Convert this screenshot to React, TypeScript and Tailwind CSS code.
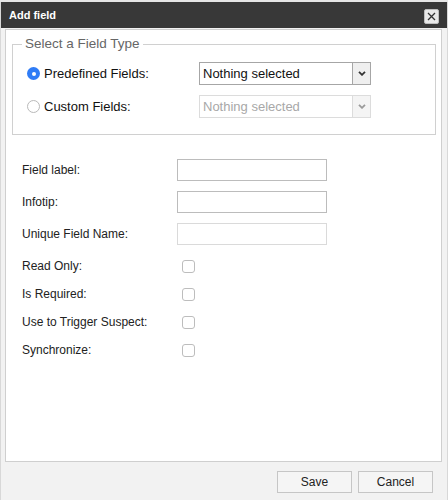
import React from "react";

const font = { fontFamily: '"Liberation Sans", Arial, sans-serif' };

function Chevron({ disabled }: { disabled?: boolean }) {
  return (
    <svg width="8" height="5" viewBox="0 0 8 5">
      <path
        d="M1 0.8 L4 3.8 L7 0.8"
        fill="none"
        stroke={disabled ? "#9a9a9a" : "#333"}
        strokeWidth="1.8"
      />
    </svg>
  );
}

function Select({ disabled }: { disabled?: boolean }) {
  return (
    <div
      className={
        "flex h-[23px] w-[172px] border " +
        (disabled ? "border-[#dcdcdc] bg-white text-[#a8a8a8]" : "border-[#a6a6a6] bg-white text-[#111]")
      }
    >
      <div className="flex flex-1 items-center pl-[3px] text-[13px]">Nothing selected</div>
      <div
        className={
          "flex w-[18px] items-center justify-center border-l " +
          (disabled ? "border-[#dcdcdc] bg-[#f4f4f4]" : "border-[#a6a6a6] bg-[#efefef]")
        }
      >
        <Chevron disabled={disabled} />
      </div>
    </div>
  );
}

function Radio({ checked }: { checked?: boolean }) {
  return checked ? (
    <span className="flex h-[13px] w-[13px] items-center justify-center rounded-full bg-[#2f7cf6]">
      <span className="h-[4px] w-[4px] rounded-full bg-white" />
    </span>
  ) : (
    <span className="h-[13px] w-[13px] rounded-full border border-[#b9b9b9] bg-white" />
  );
}

function TextRow({ label, faint }: { label: string; faint?: boolean }) {
  return (
    <div className="flex h-[22px] items-center">
      <div className="w-[155px] text-[12px] text-[#222]">{label}</div>
      <div
        className={
          "h-[22px] w-[150px] border bg-white " + (faint ? "border-[#dadada]" : "border-[#bcbcbc]")
        }
      />
    </div>
  );
}

function CheckRow({ label }: { label: string }) {
  return (
    <div className="flex h-[22px] items-center">
      <div className="w-[160px] text-[12px] text-[#222]">{label}</div>
      <span className="h-[13px] w-[13px] rounded-[3px] border border-[#bdbdbd] bg-white" />
    </div>
  );
}

export default function App() {
  return (
    <div className="h-[500px] w-[448px] overflow-hidden bg-[#e6e6e6] pt-[2px]" style={font}>
      <div className="flex h-[498px] flex-col border-x border-[#d8d8d8] bg-[#f2f2f2]">
        {/* Title bar */}
        <div className="flex h-[26px] items-center justify-between bg-[#383838] pl-[8px] pr-[8px]">
          <span className="text-[11px] font-bold text-white">Add field</span>
          <button
            type="button"
            className="mt-[3px] flex h-[15px] w-[15px] items-center justify-center rounded-[2px] border border-[#bdbdbd] bg-[#e9e9e9]"
          >
            <svg width="9" height="9" viewBox="0 0 9 9">
              <path d="M1 1 L8 8 M8 1 L1 8" stroke="#333" strokeWidth="1.3" />
            </svg>
          </button>
        </div>

        {/* Content panel */}
        <div className="ml-[4px] mr-[5px] mt-[1px] h-[433px] border border-[#cfcfcf] bg-white">
          <fieldset className="ml-[6px] mt-[6px] w-[424px] border border-[#d0d0d0] pb-[16px] pl-[9px] pt-[10px]">
            <legend className="px-[3px] text-[13.5px] leading-[16px] text-[#666]">
              Select a Field Type
            </legend>
            <div className="flex flex-col gap-[10px] pl-[5px]">
              <div className="flex h-[23px] items-center">
                <div className="flex w-[172px] items-center gap-[4px]">
                  <Radio checked />
                  <span className="text-[13px] text-[#111]">Predefined Fields:</span>
                </div>
                <Select />
              </div>
              <div className="flex h-[23px] items-center">
                <div className="flex w-[172px] items-center gap-[4px]">
                  <Radio />
                  <span className="text-[13px] text-[#111]">Custom Fields:</span>
                </div>
                <Select disabled />
              </div>
            </div>
          </fieldset>

          <div className="mt-[24px] pl-[16px]">
            <div className="flex flex-col gap-[10px]">
              <TextRow label="Field label:" />
              <TextRow label="Infotip:" />
              <TextRow label="Unique Field Name:" faint />
            </div>
            <div className="mt-[10px] flex flex-col gap-[6px]">
              <CheckRow label="Read Only:" />
              <CheckRow label="Is Required:" />
              <CheckRow label="Use to Trigger Suspect:" />
              <CheckRow label="Synchronize:" />
            </div>
          </div>
        </div>

        {/* Footer */}
        <div className="flex flex-1 items-start justify-end gap-[6px] pr-[14px] pt-[9px]">
          <button
            type="button"
            className="h-[22px] w-[75px] border border-[#c6c6c6] bg-[#f5f5f5] text-[12px] text-[#222]"
          >
            Save
          </button>
          <button
            type="button"
            className="h-[22px] w-[75px] border border-[#c6c6c6] bg-[#f5f5f5] text-[12px] text-[#222]"
          >
            Cancel
          </button>
        </div>
      </div>
    </div>
  );
}
